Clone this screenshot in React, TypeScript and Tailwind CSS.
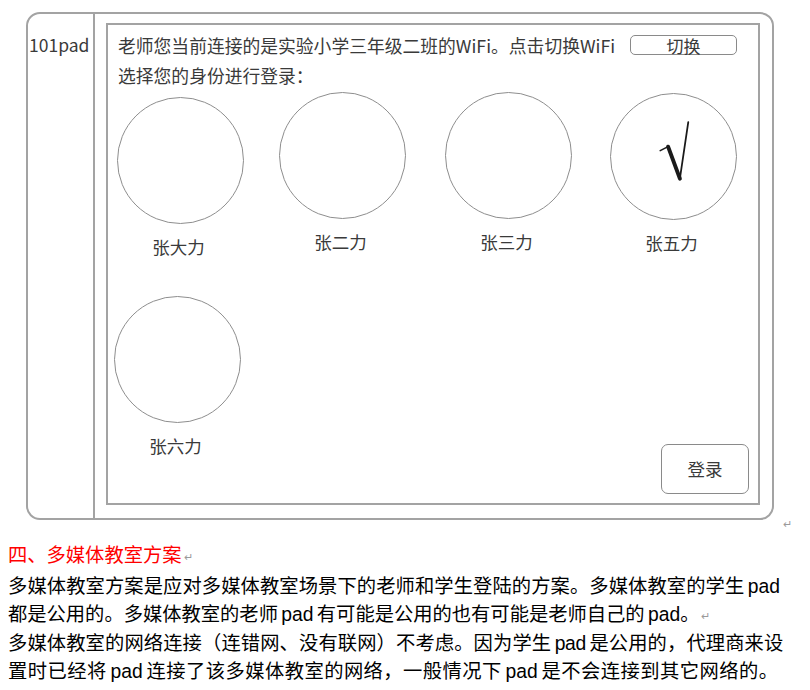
import React from 'react';

const people = [
  { name: '张大力', box: 'ml-[9px] mt-[5px]', checked: false },
  { name: '张二力', box: 'ml-[35px] mt-0', checked: false },
  { name: '张三力', box: 'ml-[39px] mt-0', checked: false },
  { name: '张五力', box: 'ml-[38px] mt-[1px]', checked: true },
];

function Check() {
  return (
    <svg viewBox="0 0 127 127" className="h-full w-full">
      <path d="M50 57.5 L58 53.5" stroke="#1a1a1a" strokeWidth="1.6" fill="none" strokeLinecap="round" />
      <path d="M58 53.5 L70 86" stroke="#1a1a1a" strokeWidth="4" fill="none" strokeLinecap="round" />
      <path d="M70 86 L78.5 28.5" stroke="#1a1a1a" strokeWidth="1.8" fill="none" strokeLinecap="round" />
    </svg>
  );
}

function Avatar({ name, checked, className }: { name: string; checked?: boolean; className: string }) {
  return (
    <div className={`flex w-[127px] flex-col items-center ${className}`}>
      <div className="h-[127px] w-[127px] rounded-full border-[1.5px] border-[#8e8e8e]">
        {checked && <Check />}
      </div>
      <div className="mt-[11px] pr-[4px] text-[17.5px] leading-[24px] text-[#3a3a3a]">{name}</div>
    </div>
  );
}

function Mark() {
  return <span className="ml-[2px] align-middle text-[11px] text-[#9a9a9a]">↵</span>;
}

export default function App() {
  return (
    <div className="h-[690px] w-[810px] overflow-hidden bg-white font-['Noto_Sans_CJK_SC',sans-serif]">
      <div className="flex items-end">
        <div className="ml-[26px] mt-[12px] flex h-[508px] w-[748px] rounded-[14px] border-2 border-[#a3a3a3]">
          <div className="w-[67px] border-r-2 border-[#a3a3a3] pl-[1px] pt-[16px] text-[17.5px] leading-[30px] text-[#3a3a3a]">
            101pad
          </div>
          <div className="flex flex-1 flex-col pb-[13px] pl-[11px] pr-[12px] pt-[9px]">
            <div className="flex flex-1 flex-col border-2 border-[#a3a3a3]">
              <div className="pl-[10px] pt-[5px] text-[17.8px] leading-[30px] text-[#3a3a3a]">
                <div className="flex items-center">
                  <span>老师您当前连接的是实验小学三年级二班的WiFi。点击切换WiFi</span>
                  <button className="ml-auto mr-[21px] flex h-[20px] w-[107px] items-center justify-center rounded-[5px] border-[1.5px] border-[#8a8a8a] text-[17px] leading-none">
                    切换
                  </button>
                </div>
                <div>选择您的身份进行登录：</div>
              </div>
              <div className="mt-[2px] flex items-start">
                {people.map((p) => (
                  <Avatar key={p.name} name={p.name} checked={p.checked} className={p.box} />
                ))}
              </div>
              <div className="flex flex-1 items-start justify-between">
                <Avatar name="张六力" className="ml-[6px] mt-[37px]" />
                <button className="mb-[9px] mr-[9px] flex h-[50px] w-[88px] items-center justify-center self-end rounded-[7px] border-[1.5px] border-[#8a8a8a] text-[17.5px] text-[#3a3a3a]">
                  登录
                </button>
              </div>
            </div>
          </div>
        </div>
        <span className="mb-[-9px] ml-[9px] text-[11px] leading-none text-[#9a9a9a]">↵</span>
      </div>

      <div className="mt-[22px] pl-[8px] font-['Liberation_Sans','Noto_Sans_CJK_SC',sans-serif] text-[19.3px] leading-[28px] text-[#000] [word-spacing:-2px]">
        <div className="text-[#ff0000]">
          四、多媒体教室方案
          <Mark />
        </div>
        <div className="mt-[2px]">
          <div className="w-[772px] whitespace-nowrap [text-align-last:justify]">
            多媒体教室方案是应对多媒体教室场景下的老师和学生登陆的方案。多媒体教室的学生 pad
          </div>
          <div className="whitespace-nowrap">
            都是公用的。多媒体教室的老师 pad 有可能是公用的也有可能是老师自己的 pad。
            <Mark />
          </div>
        </div>
        <div>
          <div className="w-[775px] whitespace-nowrap tracking-[-0.3px] [text-align-last:justify]">
            多媒体教室的网络连接（连错网、没有联网）不考虑。因为学生 pad 是公用的，代理商来设
          </div>
          <div className="w-[770px] whitespace-nowrap [text-align-last:justify]">
            置时已经将 pad 连接了该多媒体教室的网络，一般情况下 pad 是不会连接到其它网络的。
          </div>
        </div>
      </div>
    </div>
  );
}
